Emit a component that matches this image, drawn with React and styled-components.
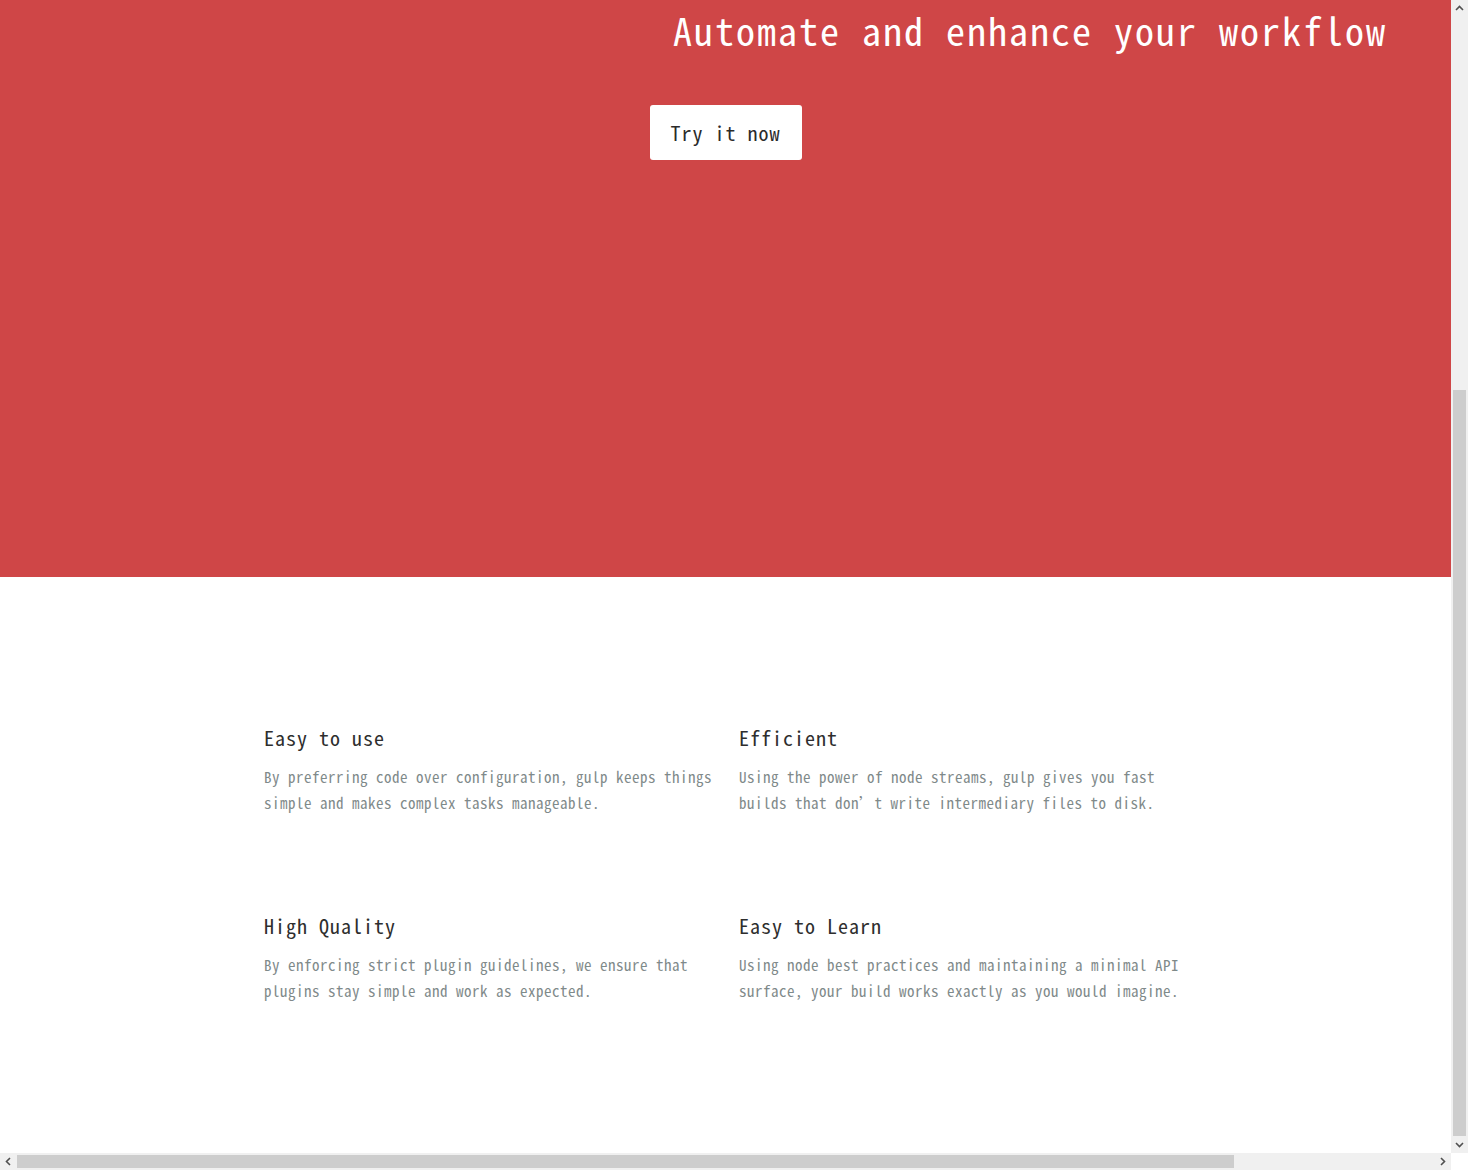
import React from "react";
import styled, { createGlobalStyle } from "styled-components";

const GlobalStyle = createGlobalStyle`
  html, body { margin: 0; padding: 0; background: #ffffff; }
  body { font-family: "Noto Sans Mono CJK SC", "Noto Sans CJK SC", monospace; overflow: hidden; }
  * { box-sizing: border-box; }
`;

const Page = styled.div`
  width: 1451px;
  display: flex;
  flex-direction: column;
`;

const Hero = styled.header`
  background: #cf4647;
  height: 577px;
  display: flex;
  flex-direction: column;
  align-items: center;
`;

const HeroTitle = styled.h1`
  align-self: stretch;
  margin: 0;
  padding-right: 64px;
  text-align: right;
  color: #ffffff;
  font-weight: 400;
  font-size: 38px;
  letter-spacing: 2px;
  line-height: 60px;
  white-space: nowrap;
`;

const TryButton = styled.a`
  margin-top: 45px;
  width: 152px;
  height: 55px;
  display: flex;
  align-items: center;
  justify-content: center;
  background: #ffffff;
  border-radius: 3px;
  color: #2b2b2b;
  font-size: 20px;
  letter-spacing: 1px;
  text-decoration: none;
  cursor: pointer;
`;

const Features = styled.section`
  padding: 146px 0 166px 264px;
  display: grid;
  grid-template-columns: 455px 455px;
  column-gap: 20px;
  row-gap: 95px;
`;

const Feature = styled.article`
  display: flex;
  flex-direction: column;
`;

const FeatureTitle = styled.h3`
  margin: 0;
  font-weight: 400;
  font-size: 20px;
  letter-spacing: 1px;
  line-height: 30px;
  color: #2e2e2e;
`;

const FeatureText = styled.p`
  margin: 11px 0 0;
  font-size: 15px;
  letter-spacing: 0.5px;
  line-height: 26px;
  color: #7f8a8a;
`;

/* browser scrollbars visible in the reference, drawn over the page */
const VBar = styled.div`
  position: fixed;
  top: 0;
  right: 0;
  width: 17px;
  height: 1153px;
  background: #f0f0f0;
`;

const HBar = styled.div`
  position: fixed;
  left: 0;
  bottom: 0;
  width: 1451px;
  height: 17px;
  background: #f0f0f0;
`;

const Corner = styled.div`
  position: fixed;
  right: 0;
  bottom: 0;
  width: 17px;
  height: 17px;
  background: #ffffff;
`;

const Thumb = styled.div`
  position: absolute;
  background: #cdcdcd;
  ${(p) =>
    p.$vertical
      ? `left: 2px; width: 13px; top: 390px; height: 746px;`
      : `top: 2px; height: 13px; left: 17px; width: 1217px;`}
`;

const Arrow = styled.svg`
  position: absolute;
  width: 17px;
  height: 17px;
  ${(p) => p.$pos}
`;

const chevrons = {
  up: "M5 10 L8.5 6.5 L12 10",
  down: "M5 7 L8.5 10.5 L12 7",
  left: "M10 5 L6.5 8.5 L10 12",
  right: "M7 5 L10.5 8.5 L7 12",
};

function Chevron({ dir, pos }) {
  return (
    <Arrow $pos={pos} viewBox="0 0 17 17">
      <path d={chevrons[dir]} fill="none" stroke="#505050" strokeWidth="1.6" />
    </Arrow>
  );
}

const features = [
  {
    title: "Easy to use",
    text: "By preferring code over configuration, gulp keeps things simple and makes complex tasks manageable.",
  },
  {
    title: "Efficient",
    text: "Using the power of node streams, gulp gives you fast builds that don\u2019t write intermediary files to disk.",
  },
  {
    title: "High Quality",
    text: "By enforcing strict plugin guidelines, we ensure that plugins stay simple and work as expected.",
  },
  {
    title: "Easy to Learn",
    text: "Using node best practices and maintaining a minimal API surface, your build works exactly as you would imagine.",
  },
];

export default function App() {
  return (
    <>
      <GlobalStyle />
      <Page>
        <Hero>
          <HeroTitle>Automate and enhance your workflow</HeroTitle>
          <TryButton>Try it now</TryButton>
        </Hero>
        <Features>
          {features.map((f) => (
            <Feature key={f.title}>
              <FeatureTitle>{f.title}</FeatureTitle>
              <FeatureText>{f.text}</FeatureText>
            </Feature>
          ))}
        </Features>
      </Page>
      <VBar>
        <Chevron dir="up" pos="top: 0; left: 0;" />
        <Thumb $vertical />
        <Chevron dir="down" pos="top: 1136px; left: 0;" />
      </VBar>
      <HBar>
        <Chevron dir="left" pos="top: 0; left: 0;" />
        <Thumb />
        <Chevron dir="right" pos="top: 0; right: 0;" />
      </HBar>
      <Corner />
    </>
  );
}
